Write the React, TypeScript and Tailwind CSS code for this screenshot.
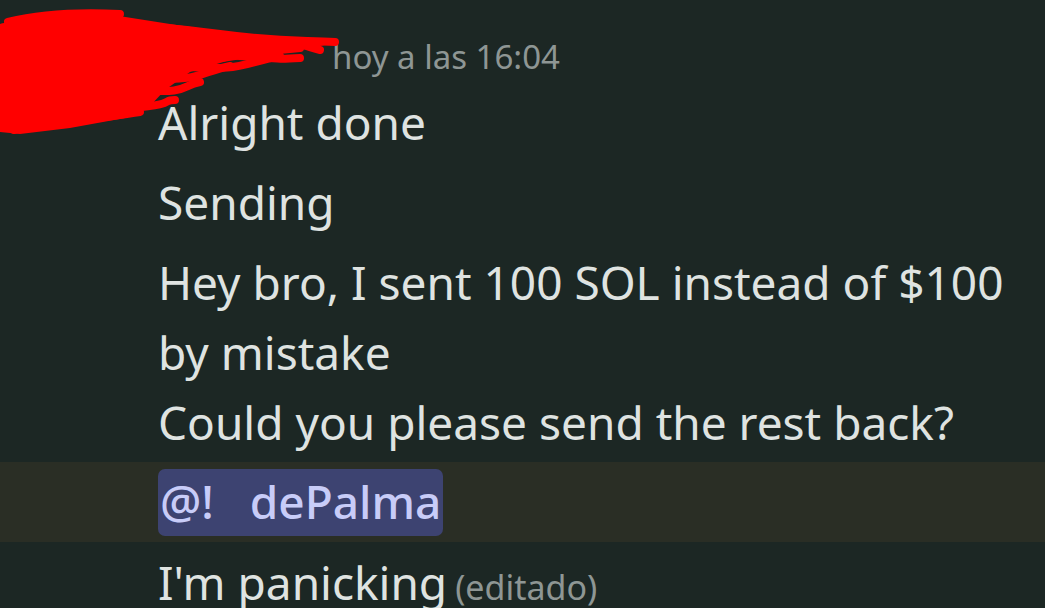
import React from 'react';

const Scribble: React.FC = () => {
  // red marker strokes hiding avatar + username
  const strokes = [
    'M8 22 C40 14 80 12 120 14',
    'M30 30 C90 20 160 26 220 34 S300 40 335 42',
    'M0 40 C80 32 160 40 240 42 S300 46 320 50',
    'M4 52 C70 44 140 50 210 54 S270 60 300 58',
    'M0 64 C60 56 120 60 180 66 S240 64 280 56',
    'M2 78 C50 70 100 74 150 78 S200 72 230 66',
    'M0 92 C40 82 90 86 140 90 S180 86 200 82',
    'M6 106 C50 96 100 100 150 102',
    'M4 118 C40 108 80 112 130 108 S160 100 175 100',
    'M14 130 C50 122 90 120 140 112',
    'M0 28 C20 24 40 20 60 20',
    'M150 70 C200 62 250 52 300 48',
  ];
  return (
    <svg
      className="absolute left-0 top-0 pointer-events-none"
      width="345"
      height="140"
      viewBox="0 0 345 140"
    >
      <path
        d="M0 24 L40 16 L100 13 L170 24 L240 34 L300 38 L330 44 L290 52 L230 60 L190 72 L165 90 L150 106 L125 118 L70 128 L20 134 L0 132 Z"
        fill="#ff0000"
      />
      {strokes.map((d, i) => (
        <path key={i} d={d} stroke="#ff0000" strokeWidth={8} strokeLinecap="round" fill="none" />
      ))}
    </svg>
  );
};

const App: React.FC = () => {
  return (
    <div
      className="relative w-[1045px] h-[608px] overflow-hidden bg-[#1c2724] text-[#dfe3e1]"
      style={{ fontFamily: '"Noto Sans", "Open Sans", sans-serif' }}
    >
      <div className="h-[82px] pl-[332px] pt-[37px]">
        <span className="block text-[33px] leading-[40px] text-[#8e9694]">hoy a las 16:04</span>
      </div>

      <div className="pl-[158px] text-[46px]">
        <div className="h-[80px] leading-[80px]">Alright done</div>
        <div className="h-[80px] leading-[80px]">Sending</div>
        <div className="py-[5px] leading-[70px]">
          <div>Hey bro, I sent 100 SOL instead of $100 by mistake</div>
          <div>Could you please send the rest back?</div>
        </div>
      </div>

      <div className="h-[80px] bg-[#2a2e25] pl-[158px] flex items-center">
        <span className="inline-block h-[67px] leading-[64px] px-[2px] rounded-[7px] bg-[#3d4371] text-[#c8ccf8] text-[46px] font-medium">
          @!&nbsp;&nbsp;&nbsp;dePalma
        </span>
      </div>

      <div className="h-[80px] pl-[158px] leading-[80px] text-[46px] whitespace-nowrap">
        I'm panicking<span className="ml-[8px] text-[34px] text-[#8e9694]">(editado)</span>
      </div>

      <Scribble />
    </div>
  );
};

export default App;
